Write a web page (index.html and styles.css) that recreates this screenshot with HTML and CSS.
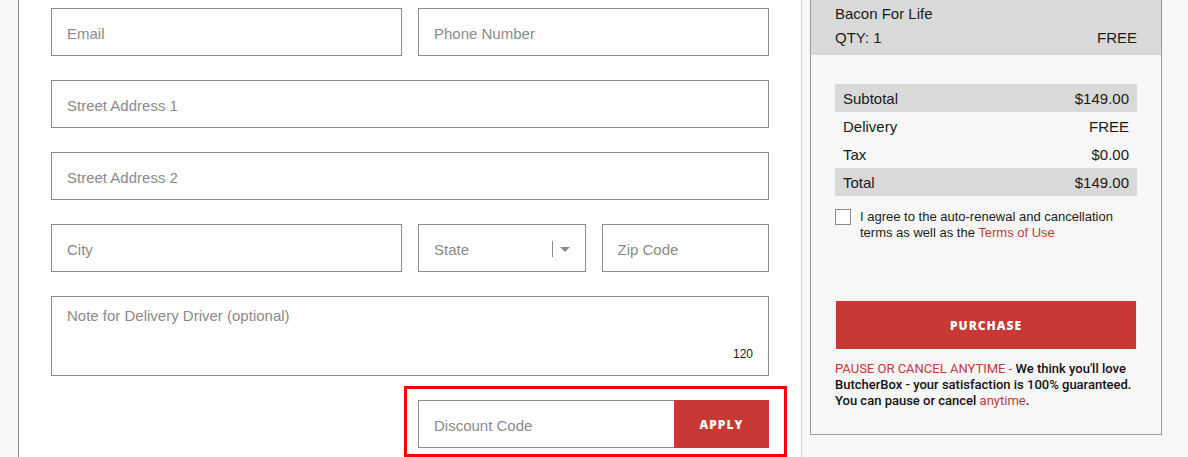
FILE: index.html
```html
<!DOCTYPE html>
<html lang="en">
<head>
  <meta charset="UTF-8" />
  <title>Checkout</title>
  <link rel="stylesheet" href="styles.css">
</head>
<body>
  <div class="checkout">
    <div class="form-column">
      <div class="form-grid">
        <input class="field span-2" type="text" placeholder="Email" />
        <input class="field span-2" type="text" placeholder="Phone Number" />
        <input class="field span-4" type="text" placeholder="Street Address 1" />
        <input class="field span-4" type="text" placeholder="Street Address 2" />
        <input class="field span-2" type="text" placeholder="City" />
        <div class="field select">
          <span>State</span>
          <span class="select-sep"></span>
          <span class="select-arrow"></span>
        </div>
        <input class="field" type="text" placeholder="Zip Code" />
        <div class="note span-4">
          <textarea class="field note-input" placeholder="Note for Delivery Driver (optional)"></textarea>
          <span class="note-count">120</span>
        </div>
      </div>
      <div class="discount-row">
        <div class="discount-highlight">
          <div class="discount">
            <input class="discount-input" type="text" placeholder="Discount Code" />
            <button class="apply-btn">APPLY</button>
          </div>
        </div>
      </div>
    </div>

    <div class="summary">
      <div class="summary-item">
        <div>Bacon For Life</div>
        <div class="line"><span>QTY: 1</span><span>FREE</span></div>
      </div>
      <div class="summary-body">
        <div class="totals">
          <div class="line shaded"><span>Subtotal</span><span>$149.00</span></div>
          <div class="line"><span>Delivery</span><span>FREE</span></div>
          <div class="line"><span>Tax</span><span>$0.00</span></div>
          <div class="line shaded"><span>Total</span><span>$149.00</span></div>
        </div>
        <label class="agree">
          <span class="checkbox"></span>
          <span>I agree to the auto-renewal and cancellation terms as well as the <a href="#">Terms of Use</a></span>
        </label>
        <button class="purchase-btn">PURCHASE</button>
        <p class="guarantee">
          <span class="red">PAUSE OR CANCEL ANYTIME - </span>We think you'll love ButcherBox - your satisfaction is 100% guaranteed. You can pause or cancel <a href="#">anytime</a>.
        </p>
      </div>
    </div>
  </div>
</body>
</html>
```

FILE: styles.css
```css
* {
  margin: 0;
  padding: 0;
  box-sizing: border-box;
}

body {
  background-color: #f7f7f7;
  color: #1a1a1a;
  font-family: 'Liberation Sans', Arial, sans-serif;
  overflow: hidden;
}

.checkout {
  display: flex;
  align-items: flex-start;
}

.form-column {
  margin-left: 18px;
  width: 784px;
  height: 457px;
  background-color: #ffffff;
  border-left: 1px solid #8c8c8c;
  border-right: 1px solid #d0d0d0;
  padding: 8px 32px 0;
}

.form-grid {
  display: grid;
  grid-template-columns: repeat(4, minmax(0, 1fr));
  column-gap: 16px;
  row-gap: 24px;
  width: 718px;
}

.span-2 { grid-column: span 2; }
.span-4 { grid-column: span 4; }

.field {
  width: 100%;
  min-width: 0;
  height: 48px;
  border: 1px solid #8c8c8c;
  background-color: #ffffff;
  padding: 2px 15px 0;
  font-family: inherit;
  font-size: 15px;
  color: #333;
  outline: none;
}

.field::placeholder,
.discount-input::placeholder {
  color: #8a8a8a;
}

.select {
  display: flex;
  align-items: center;
  color: #8a8a8a;
}

.select span:first-child {
  flex: 1;
}

.select-sep {
  width: 1px;
  height: 16px;
  background-color: #8c8c8c;
  margin-right: 7px;
}

.select-arrow {
  width: 0;
  height: 0;
  border-left: 5px solid transparent;
  border-right: 5px solid transparent;
  border-top: 5px solid #8c8c8c;
}

.note {
  position: relative;
}

.note-input {
  display: block;
  height: 80px;
  padding-top: 10px;
  resize: none;
}

.note-count {
  position: absolute;
  right: 16px;
  bottom: 15px;
  font-size: 12px;
  color: #1a1a1a;
}

.discount-row {
  display: flex;
  justify-content: flex-end;
  margin-top: 10px;
  margin-right: -18px;
}

.discount-highlight {
  border: 3px solid #ff0000;
  padding: 11px 15px 6px 11px;
}

.discount {
  display: flex;
  width: 351px;
  height: 48px;
  border: 1px solid #8c8c8c;
}

.discount-input {
  flex: 1;
  min-width: 0;
  border: none;
  padding: 2px 15px 0;
  font-family: inherit;
  font-size: 15px;
  outline: none;
}

.apply-btn {
  width: 95px;
  margin: -1px -1px -1px 0;
  background-color: #c83835;
  color: #ffffff;
  border: none;
  font-family: 'Open Sans', sans-serif;
  font-weight: 800;
  font-size: 12px;
  letter-spacing: 1px;
}

.summary {
  margin-left: 8px;
  width: 352px;
  border: 1px solid #999999;
  border-top: none;
  background-color: #f7f7f7;
  font-size: 15px;
}

.summary-item {
  background-color: #d9d9d9;
  padding: 2px 24px 5px;
  line-height: 24px;
}

.line {
  display: flex;
  justify-content: space-between;
}

.summary-body {
  padding: 29px 24px 25px;
}

.totals .line {
  height: 28px;
  align-items: center;
  padding: 0 8px;
}

.totals .shaded {
  background-color: #d9d9d9;
}

.agree {
  display: flex;
  gap: 9px;
  margin-top: 13px;
  font-size: 13px;
  line-height: 16px;
}

.checkbox {
  flex: none;
  width: 16px;
  height: 16px;
  border: 1px solid #8c8c8c;
  background-color: #ffffff;
}

a {
  color: #c83835;
  text-decoration: none;
}

.purchase-btn {
  display: block;
  width: 300px;
  height: 48px;
  margin: 60px 0 0 1px;
  background-color: #c83835;
  color: #ffffff;
  border: none;
  font-family: 'Open Sans', sans-serif;
  font-weight: 800;
  font-size: 12px;
  letter-spacing: 1px;
}

.guarantee {
  margin-top: 12px;
  font-family: Roboto, 'Liberation Sans', sans-serif;
  font-size: 13px;
  line-height: 16px;
  font-weight: 500;
  color: #111;
}

.guarantee .red,
.guarantee a {
  color: #c83835;
  font-weight: 400;
}
```
